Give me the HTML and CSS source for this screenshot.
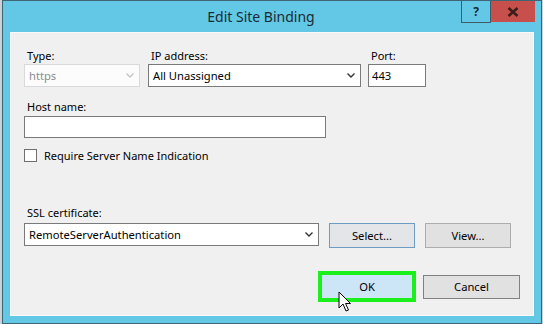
FILE: index.html
```html
<!DOCTYPE html>
<html lang="en">
<head>
  <meta charset="UTF-8">
  <title>Edit Site Binding</title>
  <link rel="stylesheet" href="styles.css">
</head>
<body>
  <div class="window">
    <div class="title-bar">
      <div></div>
      <div class="title">Edit Site Binding</div>
      <div class="caption-btns">
        <div class="cap-btn help">?</div>
        <div class="cap-btn close">
          <svg width="12" height="10" viewBox="0 0 12 10"><path d="M1.5 1 L10.5 9 M10.5 1 L1.5 9" stroke="#3b1d1b" stroke-width="2.6" fill="none"/></svg>
        </div>
      </div>
    </div>

    <div class="client">
      <div class="row-top">
        <div class="field">
          <label class="lbl">Type:</label>
          <div class="combo disabled type-box">
            <span>https</span>
            <svg class="chev" width="8" height="5" viewBox="0 0 8 5"><path d="M0.5 0.5 L4 4 L7.5 0.5" stroke="#c4c4c4" stroke-width="1.3" fill="none"/></svg>
          </div>
        </div>
        <div class="field">
          <label class="lbl">IP address:</label>
          <div class="combo ip-box">
            <span>All Unassigned</span>
            <svg class="chev" width="8" height="5" viewBox="0 0 8 5"><path d="M0.5 0.5 L4 4 L7.5 0.5" stroke="#333" stroke-width="1.4" fill="none"/></svg>
          </div>
        </div>
        <div class="field">
          <label class="lbl">Port:</label>
          <div class="textbox port-box">443</div>
        </div>
      </div>

      <label class="lbl host-lbl">Host name:</label>
      <div class="textbox host-box"></div>

      <div class="check-row">
        <span class="checkbox"></span>
        <span>Require Server Name Indication</span>
      </div>

      <label class="lbl ssl-lbl">SSL certificate:</label>
      <div class="ssl-row">
        <div class="combo ssl-box">
          <span>RemoteServerAuthentication</span>
          <svg class="chev" width="8" height="5" viewBox="0 0 8 5"><path d="M0.5 0.5 L4 4 L7.5 0.5" stroke="#333" stroke-width="1.4" fill="none"/></svg>
        </div>
        <div class="btn btn-select">Select...</div>
        <div class="btn">View...</div>
      </div>

      <div class="footer">
        <div class="ok-wrap">
          <div class="btn btn-ok">OK</div>
          <svg class="cursor" width="14" height="22" viewBox="0 0 14 22"><path d="M1 1 L1 17 L5 13 L8 20 L10.5 19 L7.5 12.5 L12.5 12.5 Z" fill="#fff" stroke="#000" stroke-width="1" stroke-linejoin="miter"/></svg>
        </div>
        <div class="btn btn-cancel">Cancel</div>
      </div>
    </div>
  </div>
</body>
</html>
```

FILE: styles.css
```css
body { margin: 0; background: #c8d3d8; font-family: "Noto Sans", "Open Sans", sans-serif; font-size: 11px; color: #000; }
.window {
  width: 538px;
  height: 322px;
  margin-left: 2px;
  border: 1px solid #3d6574;
  background: #62c8e6;
  display: flex;
  flex-direction: column;
}
.title-bar {
  height: 31px;
  display: grid;
  grid-template-columns: 1fr auto 1fr;
  align-items: start;
}
.title { font-size: 14px; line-height: 31px; color: #1b2b33; margin-right: 22px; }
.caption-btns { justify-self: end; display: flex; margin-right: 6px; }
.cap-btn { height: 21px; display: flex; align-items: center; justify-content: center; }
.help {
  width: 28px;
  border: 1px solid #3f5d68;
  border-top: none;
  font-weight: bold;
  font-size: 12px;
  color: #1a2a30;
  height: 21px;
}
.close { width: 44px; background: #c7504d; height: 21px; }

.client {
  flex: 1;
  margin: 0 7px 7px;
  background: #f0f0f0;
  border: 1px solid #fafafa;
  padding: 15px 0 0 13px;
  display: flex;
  flex-direction: column;
  align-items: flex-start;
  position: relative;
}
.lbl { display: block; line-height: 15px; padding-left: 3px; margin-bottom: 1px; }
.row-top { display: flex; gap: 7px; }
.row-top .field:first-child { margin-right: 1px; }
.combo, .textbox {
  box-sizing: border-box;
  height: 23px;
  border: 1px solid #acacac;
  background: #fff;
  display: flex;
  align-items: center;
  padding: 0 4px;
}
.combo span, .textbox { font-size: 11.2px; }
.combo { justify-content: space-between; padding-right: 5px; }
.combo.disabled { background: #fcfcfc; border-color: #d9d9d9; color: #8d8d8d; }
.type-box { width: 116px; }
.ip-box { width: 213px; border-color: #7a7a7a; }
.port-box { width: 58px; border-color: #7a7a7a; padding-left: 3px; }
.host-lbl { margin-top: 12px; margin-bottom: 2px; }
.host-box { width: 302px; height: 22px; border-color: #7a7a7a; }
.check-row { display: flex; align-items: center; gap: 7px; margin-top: 10px; line-height: 15px; font-size: 11px; }
.checkbox { width: 11px; height: 11px; border: 1px solid #707070; background: #fff; }
.ssl-lbl { margin-top: 42px; margin-bottom: 3px; }
.ssl-row { display: flex; gap: 10px; align-items: flex-start; }
.ssl-box { width: 295px; border-color: #7a7a7a; }
.btn {
  box-sizing: border-box;
  width: 86px;
  height: 25px;
  border: 1px solid #adadad;
  background: #e1e1e1;
  display: flex;
  align-items: center;
  justify-content: center;
  font-size: 11.2px;
}
.btn-select { border-color: #6c9bc4; background: #e3e5e8; }
.footer {
  align-self: stretch;
  display: flex;
  justify-content: flex-end;
  align-items: center;
  gap: 7px;
  margin-top: 23px;
  padding-right: 13px;
}
.ok-wrap { position: relative; border: 4px solid #1cf01c; }
.btn-ok { width: 90px; height: 23px; border: none; background: #cde6f7; }
.btn-cancel { width: 97px; height: 24px; border-color: #808080; }
.cursor { position: absolute; left: 16px; top: 16px; }
```
